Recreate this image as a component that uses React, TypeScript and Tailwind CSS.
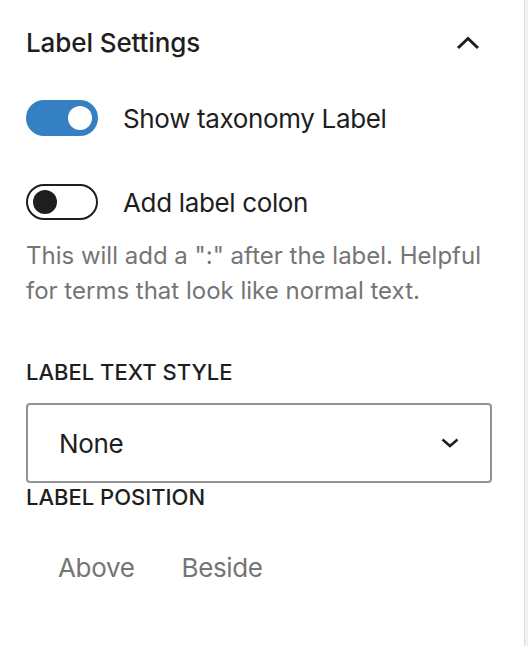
export default function App() {
  return (
    <div className="flex h-[646px] w-[528px] bg-[#f0f0f0] font-['Inter',sans-serif] text-[#1e1e1e]">
      <div className="h-full w-[525px] border-r border-[#e0e0e0] bg-white pl-[26px] pr-[34px] pt-[27px]">
        {/* Header */}
        <div className="flex h-[32px] items-center justify-between">
          <h2 className="text-[26px] font-medium leading-[32px] tracking-[-0.1px]">Label Settings</h2>
          <svg width="24" height="14" viewBox="0 0 24 14" className="mr-[10px]" fill="none">
            <path d="M2 12 L12 2.5 L22 12" stroke="#1e1e1e" strokeWidth="3" />
          </svg>
        </div>

        {/* Toggles */}
        <div className="mt-[41px] flex h-[36px] items-center gap-[25px]">
          <div className="flex h-[36px] w-[72px] items-center justify-end rounded-full bg-[#3580c2] pr-[6px]">
            <div className="h-[24px] w-[24px] rounded-full bg-white" />
          </div>
          <span className="pt-[2px] text-[26px] leading-[36px] tracking-[-0.35px]">Show taxonomy Label</span>
        </div>

        <div className="mt-[48px] flex h-[36px] items-center gap-[25px]">
          <div className="flex h-[36px] w-[72px] items-center rounded-full border-[2.5px] border-[#1e1e1e] pl-[5px]">
            <div className="h-[24px] w-[24px] rounded-full bg-[#1e1e1e]" />
          </div>
          <span className="pt-[2px] text-[26px] leading-[36px] tracking-[-0.35px]">Add label colon</span>
        </div>

        <p className="mt-[18px] text-[24px] leading-[35px] text-[#757575]">
          This will add a ":" after the label. Helpful for terms that look like normal text.
        </p>

        {/* Label text style */}
        <div className="mt-[52px] text-[22px] font-medium uppercase leading-[24px]">Label text style</div>
        <div className="mt-[19px] flex h-[80px] w-[466px] items-center justify-between rounded-[4px] border-2 border-[#949494] pl-[31px] pr-[31px]">
          <span className="pt-[2px] text-[26px] leading-[36px] tracking-[-0.35px]">None</span>
          <svg width="18" height="10" viewBox="0 0 18 10" fill="none">
            <path d="M1.5 1.5 L9 8 L16.5 1.5" stroke="#1e1e1e" strokeWidth="2.5" />
          </svg>
        </div>

        {/* Label position */}
        <div className="mt-[2px] text-[22px] font-medium uppercase leading-[24px]">Label position</div>
        <div className="ml-[32px] mt-[41px] flex gap-[47px] text-[26px] leading-[36px] tracking-[-0.35px] text-[#757575]">
          <span>Above</span>
          <span>Beside</span>
        </div>
      </div>
    </div>
  );
}
